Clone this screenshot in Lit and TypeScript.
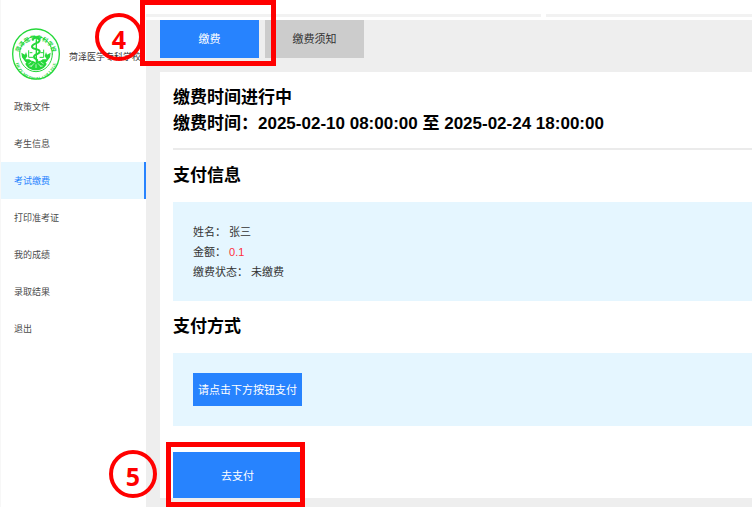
import { LitElement, html, css } from "lit";
import { customElement, property, state } from "lit/decorators.js";
import { classMap } from "lit/directives/class-map.js";

const SANS = css`"Liberation Sans", "Noto Sans CJK SC", sans-serif`;

@customElement("school-logo")
class SchoolLogo extends LitElement {
  static styles = css`
    :host {
      display: block;
    }
    svg {
      display: block;
      width: 48px;
      height: 52px;
    }
    text {
      fill: #25d83a;
      font-weight: bold;
      font-family: "Liberation Serif", "Noto Sans CJK SC", serif;
    }
    .cn {
      font-size: 17px;
    }
    .en {
      font-size: 13px;
    }
    .line {
      fill: none;
      stroke: #25d83a;
      stroke-linecap: round;
    }
    .solid {
      fill: #25d83a;
    }
  `;

  render() {
    return html`
      <svg viewBox="0 0 144 156" preserveAspectRatio="none" role="img" aria-label="校徽">
        <defs>
          <path id="top" d="M19 92 A53 57 0 1 1 125 92" />
          <path id="bottom" d="M9 88 A63 68 0 0 0 135 88" />
        </defs>
        <ellipse class="line" cx="72" cy="78" rx="70" ry="75" stroke-width="4" />
        <ellipse class="line" cx="72" cy="78" rx="49" ry="53" stroke-width="3" />
        <text class="cn"><textPath href="#top" startOffset="50%" text-anchor="middle">菏泽医学专科学校</textPath></text>
        <text class="en"><textPath href="#bottom" startOffset="50%" text-anchor="middle">HEZE MEDICAL COLLEGE</textPath></text>
        <path class="line" stroke-width="4" d="M73 35 V106" />
        <path class="line" stroke-width="6" d="M63 34 C68 26 84 30 82 39 C80 47 60 46 60 56 C60 65 84 61 83 71 C82 80 65 78 66 87 C67 94 78 92 76 100" />
        <path class="line" stroke-width="3" d="M50 68 V88 H62 M95 66 V88 H84 M54 74 H60 M86 74 H94" />
        <path class="solid" d="M28 74 L39 80 L42 72 L46 84 L40 94 L52 94 L60 101 L52 108 L40 101 L30 88 Z" />
        <path class="solid" d="M116 74 L105 80 L102 72 L98 84 L104 94 L92 94 L84 101 L92 108 L104 101 L114 88 Z" />
        <path class="solid" d="M40 108 C45 95 59 94 72 104 C85 94 99 95 104 108 C98 121 85 127 72 127 C59 127 46 121 40 108 Z" />
        <path d="M49 108 L58 102 M57 116 L66 106 M72 109 V120 M87 116 L78 106 M95 108 L86 102 M52 114 H60 M84 114 H92" stroke="#ffffff" stroke-width="2" />
      </svg>
    `;
  }
}

@customElement("step-mark")
class StepMark extends LitElement {
  @property() label = "";

  static styles = css`
    :host {
      display: flex;
      box-sizing: border-box;
      width: 48px;
      height: 48px;
      border: 4px solid #ff0000;
      border-radius: 50%;
      align-items: center;
      justify-content: center;
      color: #ff0000;
      font: bold 25px/40px "Noto Sans", sans-serif;
      pointer-events: none;
    }
    span {
      padding-top: 3px;
    }
  `;

  render() {
    return html`<span>${this.label}</span>`;
  }
}

@customElement("app-root")
class AppRoot extends LitElement {
  @state() private active = "考试缴费";
  @state() private tab = "缴费";

  private menu = ["政策文件", "考生信息", "考试缴费", "打印准考证", "我的成绩", "录取结果", "退出"];
  private tabs = ["缴费", "缴费须知"];

  static styles = css`
    :host {
      display: block;
      background: #ffffff;
      overflow: hidden;
      font-family: ${SANS};
      font-size: 11px;
      color: #333333;
    }
    * {
      box-sizing: border-box;
    }
    button {
      border: 0;
      padding: 0;
      font: inherit;
      color: #ffffff;
      background: #2783fe;
      cursor: pointer;
    }
    .page {
      display: flex;
      align-items: stretch;
    }
    .side {
      flex: none;
      width: 146px;
      border-left: 1px solid #f7f7f7;
      font-size: 9px;
    }
    .brand {
      display: flex;
      align-items: flex-start;
      gap: 9px;
      height: 88px;
      padding: 28px 0 0 11px;
      line-height: 58px;
      white-space: nowrap;
    }
    .nav {
      display: flex;
      flex-direction: column;
    }
    .item {
      height: 37px;
      padding-left: 13px;
      border-right: 2px solid transparent;
      line-height: 38px;
      color: #4c4c4c;
      text-decoration: none;
    }
    .item.on {
      color: #2783fe;
      background: #e5f6ff;
      border-right-color: #2783fe;
    }
    .main {
      flex: 1;
      min-width: 0;
      display: flex;
      flex-direction: column;
    }
    .strip {
      display: grid;
      grid-template-columns: 395fr 206fr;
      gap: 5px;
      padding: 14px 0 3px;
    }
    .strip span {
      height: 3px;
      background: #f2f2f2;
    }
    .content {
      padding: 0 0 9px 14px;
      background: #eeeeee;
    }
    .tabs {
      display: flex;
      gap: 6px;
      padding-bottom: 14px;
    }
    .spot {
      position: relative;
    }
    .tab {
      display: block;
      width: 99px;
      height: 38px;
      padding-bottom: 3px;
      color: #333333;
      background: #cccccc;
    }
    .tab.on {
      color: #ffffff;
      background: #2783fe;
    }
    .frame {
      position: absolute;
      z-index: 1;
      border: 5px solid #ff0000;
      pointer-events: none;
    }
    .frame-tab {
      inset: -20px -17px -8px -20px;
    }
    .frame-pay {
      inset: -10px -3px -9px -7px;
    }
    step-mark {
      position: absolute;
      z-index: 1;
    }
    .mark-tab {
      left: -65px;
      top: -7px;
    }
    .mark-pay {
      left: -64px;
      top: -2px;
    }
    .panel {
      padding: 13px 0 0 13px;
      background: #ffffff;
    }
    h2 {
      margin: 0;
      font-size: 17px;
      line-height: 26px;
      color: #000000;
    }
    .period {
      padding-bottom: 11px;
      border-bottom: 2px solid #ebebeb;
      margin-bottom: 13px;
    }
    .box {
      margin: 13px 0;
      padding: 20px 20px 19px;
      background: #e5f6ff;
    }
    .box p {
      margin: 0;
      line-height: 20px;
    }
    .amount {
      color: #ff2d3c;
    }
    .method {
      margin-bottom: 26px;
      padding-bottom: 20px;
    }
    .hint {
      display: block;
      height: 33px;
      padding: 0 5px 2px;
    }
    .pay-spot {
      width: 129px;
    }
    .pay {
      display: block;
      width: 100%;
      height: 46px;
    }
  `;

  render() {
    return html`
      <div class="page">
        <aside class="side">
          <div class="brand">
            <school-logo></school-logo>
            <span>菏泽医学专科学校</span>
          </div>
          <nav class="nav">
            ${this.menu.map(
              (name) => html`<a
                href="#"
                class=${classMap({ item: true, on: name === this.active })}
                @click=${(e: Event) => {
                  e.preventDefault();
                  this.active = name;
                }}
                >${name}</a
              >`
            )}
          </nav>
        </aside>
        <main class="main">
          <div class="strip"><span></span><span></span></div>
          <div class="content">
            <div class="tabs">
              ${this.tabs.map(
                (name, i) => html`<div class="spot">
                  <button
                    class=${classMap({ tab: true, on: name === this.tab })}
                    @click=${() => (this.tab = name)}
                  >
                    ${name}
                  </button>
                  ${i === 0
                    ? html`<div class="frame frame-tab"></div>
                        <step-mark class="mark-tab" label="4"></step-mark>`
                    : ""}
                </div>`
              )}
            </div>
            <section class="panel">
              <div class="period">
                <h2>缴费时间进行中</h2>
                <h2>缴费时间：2025-02-10 08:00:00 至 2025-02-24 18:00:00</h2>
              </div>
              <h2>支付信息</h2>
              <div class="box">
                <p>姓名： 张三</p>
                <p>金额： <span class="amount">0.1</span></p>
                <p>缴费状态： 未缴费</p>
              </div>
              <h2>支付方式</h2>
              <div class="box method">
                <button class="hint">请点击下方按钮支付</button>
              </div>
              <div class="spot pay-spot">
                <button class="pay">去支付</button>
                <div class="frame frame-pay"></div>
                <step-mark class="mark-pay" label="5"></step-mark>
              </div>
            </section>
          </div>
        </main>
      </div>
    `;
  }
}
